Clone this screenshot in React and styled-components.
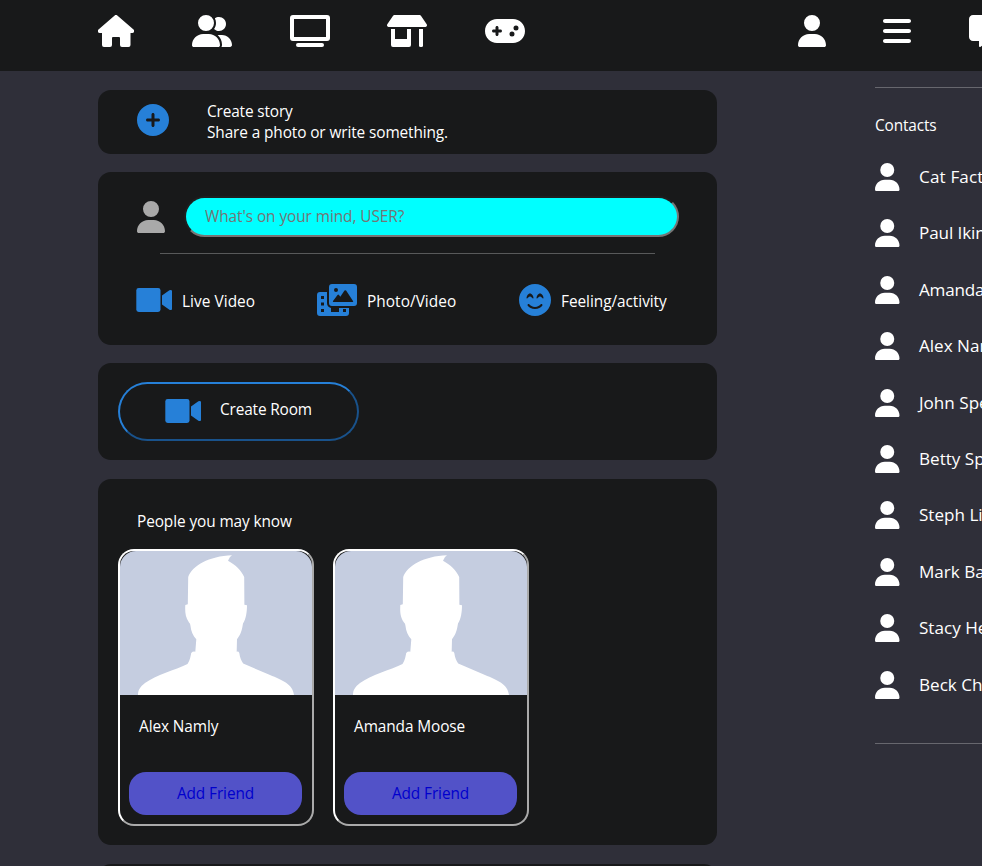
import React from "react";
import styled, { createGlobalStyle } from "styled-components";
import {
  FaUserGroup, FaGamepad, FaUser, FaBars, FaMessage, FaCirclePlus, FaFaceSmileBeam,
} from "react-icons/fa6";

const GlobalStyle = createGlobalStyle`
  * { box-sizing: border-box; }
  html, body { margin: 0; height: 866px; overflow: hidden; background: #2f2f39; }
  body { font-family: "Open Sans", "Noto Sans", sans-serif; color: #fff; }
  svg { display: block; flex: none; }
`;

const Page = styled.div`
  width: 982px;
  height: 866px;
  overflow: hidden;
`;

const Header = styled.header`
  height: 71px;
  padding: 15px 0 0 98px;
  background: #18191a;
  display: flex;
  gap: 273px;
  overflow: hidden;
`;

const NavGroup = styled.nav`
  display: flex;
  flex: none;
  gap: ${(p) => p.$gap}px;
`;

const Icon = styled.span`
  display: block;
  flex: none;
  width: ${(p) => p.$width}px;
  height: ${(p) => p.$height || 32}px;
  color: ${(p) => p.$color || "#fff"};
  svg { width: 100%; height: 100%; }
`;

const Columns = styled.div`
  display: flex;
  gap: 158px;
  padding-left: 98px;
`;

const Feed = styled.main`
  width: 619px;
  flex: none;
  padding-top: 19px;
`;

const Card = styled.section`
  height: ${(p) => p.$height}px;
  margin-bottom: ${(p) => p.$gap || 18}px;
  background: #18191a;
  border-radius: 13px;
`;

const StoryCard = styled(Card)`
  display: flex;
  padding: 14px 39px;
  gap: 38px;
`;

const Label = styled.span`
  display: block;
  font-size: ${(p) => p.$size || 15.4}px;
  line-height: 21px;
  letter-spacing: ${(p) => p.$track || 0}px;
  white-space: nowrap;
`;

const StoryText = styled.div`
  margin-top: -3px;
`;

const Composer = styled.div`
  display: flex;
  padding: 24px 38px 0 39px;
  gap: 19px;
  ${Icon} { margin-top: 5px; }
`;

const StatusInput = styled.input`
  width: 495px;
  height: 41px;
  padding: 0 19px 1px;
  border: 2px solid;
  border-color: #1e1f20 #767676 #767676 #1e1f20;
  border-radius: 20.5px;
  background: #00ffff;
  font: 15.4px "Open Sans", "Noto Sans", sans-serif;
  letter-spacing: ${(p) => p.$track}px;
  outline: none;
  &::placeholder { color: #757575; opacity: 1; }
`;

const Divider = styled.div`
  height: 1px;
  width: 495px;
  margin: 16px 0 0 62px;
  background: #58595a;
`;

const Actions = styled.div`
  display: grid;
  grid-template-columns: 181px 202px auto;
  padding: 30px 0 0 38px;
`;

const Action = styled.div`
  display: flex;
  gap: 10px;
  ${Label} { margin-top: 7px; }
`;

const RoomCard = styled(Card)`
  padding: 19px 20px;
`;

const RoomButton = styled.button`
  display: flex;
  width: 241px;
  height: 59px;
  padding: 11px 0 0 44.5px;
  gap: 19.5px;
  border: 2px solid;
  border-color: #2680d8 #19528b #19528b #2680d8;
  border-radius: 30px;
  background: transparent;
  color: #fff;
  font-family: inherit;
  ${Label} { margin-top: 4px; }
`;

const PeopleCard = styled(Card)`
  padding: 32px 20px 0;
`;

const PeopleTitle = styled.h2`
  margin: 0 0 17px 19px;
  font-weight: 400;
`;

const People = styled.div`
  display: flex;
  gap: 19px;
`;

const Person = styled.article`
  width: 196px;
  height: 277px;
  border: 2px solid;
  border-color: #fff #aaa #aaa #fff;
  border-radius: 16px;
  > svg { border-radius: 16px 16px 0 0; }
  > ${Label} { margin: 20.5px 0 0 19px; }
`;

const AddButton = styled.button`
  display: flex;
  justify-content: center;
  align-items: center;
  width: 173px;
  height: 43px;
  margin: 35.5px 0 0 9px;
  padding: 0;
  border: 0;
  border-radius: 17px;
  background: #5252c8;
  color: #0000cd;
  font-family: inherit;
`;

const Sidebar = styled.aside`
  width: 240px;
  flex: none;
  padding-top: 16px;
`;

const SideRule = styled.div`
  height: 1px;
  background: #67676e;
`;

const ContactsTitle = styled.div`
  margin: 27px 0;
`;

const ContactList = styled.div`
  display: grid;
  grid-template-rows: repeat(10, 56.4px);
  height: 580px;
`;

const Contact = styled.div`
  display: flex;
  gap: 19.5px;
  ${Label} { margin-top: 3px; }
`;

const HouseIcon = () => (
  <svg viewBox="0 0 36 32" fill="currentColor">
    <path d="M16.7.4a2 2 0 0 1 2.6 0L35.5 14.6a1.9 1.9 0 0 1-1.2 3.4H32.5V30a2 2 0 0 1-2 2H24a2 2 0 0 1-2-2V23a1 1 0 0 0-1-1H15a1 1 0 0 0-1 1V30a2 2 0 0 1-2 2H6a2 2 0 0 1-2-2V18H1.7A1.9 1.9 0 0 1 .5 14.6Z" />
  </svg>
);

const TvIcon = () => (
  <svg viewBox="0 0 40 32" fill="currentColor">
    <path fillRule="evenodd" d="M3 0H37a3 3 0 0 1 3 3V23a3 3 0 0 1-3 3H3a3 3 0 0 1-3-3V3a3 3 0 0 1 3-3ZM4 4V22H36V4Z" />
    <rect x="6" y="28" width="28" height="4" rx="2" />
  </svg>
);

const ShopIcon = () => (
  <svg viewBox="0 0 40 32" fill="currentColor">
    <path d="M7.6 0H32.4a2 2 0 0 1 1.7.9L39.7 9.3A1.75 1.75 0 0 1 38.3 12H1.7A1.75 1.75 0 0 1 .3 9.3L5.9.9A2 2 0 0 1 7.6 0Z" />
    <path d="M4 14H8V24H20V14H24V30a2 2 0 0 1-2 2H6a2 2 0 0 1-2-2Z" />
    <path d="M32 14h4v16.5a1.5 1.5 0 0 1-1.5 1.5h-1a1.5 1.5 0 0 1-1.5-1.5z" />
  </svg>
);

const VideoIcon = () => (
  <svg viewBox="0 0 36 32" fill="currentColor">
    <rect x="0.3" y="4" width="24.2" height="24" rx="2.4" />
    <path d="M26 11.4L33.4 6.3A2 2 0 0 1 36.5 7.9V24.1A2 2 0 0 1 33.4 25.7L26 20.6Z" />
  </svg>
);

const PhotoFilmIcon = () => (
  <svg viewBox="0 0 40 32" fill="currentColor">
    <path fillRule="evenodd" d="M15 0H37a3 3 0 0 1 3 3V19a3 3 0 0 1-3 3H15a3 3 0 0 1-3-3V3a3 3 0 0 1 3-3ZM19 4a2 2 0 1 0 0 4a2 2 0 1 0 0-4ZM16 17Q15.500 18 16.500 18H35.500Q36.700 18 36 17L29.100 6.600Q28.300 5.700 27.500 6.600L23.300 12.800L22 11Q21.200 10.200 20.500 11Z" />
    <path fillRule="evenodd" d="M3 8H10V19Q10 23 14 24V28H22V24H32V29a3 3 0 0 1-3 3H3a3 3 0 0 1-3-3V11a3 3 0 0 1 3-3ZM4 12V15H7V12ZM4 18.500V21.500H7V18.500ZM4 25V28H7V25ZM26 25V28H29V25Z" />
  </svg>
);

function Silhouette() {
  return (
    <svg width="192" height="144" viewBox="0 0 192 144" role="img" aria-label="Profile">
      <rect width="192" height="144" fill="#c5cde0" />
      <path
        fill="#fff"
        d="M18 144C18 139 20 136 25 132C36 124 55 119 67.5 113C70 109 70.5 106 71.2 102Q73 100 75.3 100.7L76.3 88.3C73 85 71 80 70.5 75Q70.3 72 69 71.5C65 66 65 60 65.3 54L67.8 53.3L68.2 26C72 15 89 5 112 4.3Q109 6 108 9.7C116 14 121 19 124.2 26L124.4 53.7L127 54.3C127 61 126 68 123 72.5C122 79 121 83 117 88.3L116.7 100.7Q118.5 100 119.3 102C120 107 121.5 110 123.2 112.5L150 124C162 129 173 133 174 144Z"
      />
    </svg>
  );
}

const BLUE = "#2680d8";

const people = [
  { name: "Alex Namly", track: -0.1 },
  { name: "Amanda Moose", track: -0.1 },
];

const contacts = [
  { name: "Cat Facts", track: 0.15 },
  { name: "Paul Ikin", track: -0.1 },
  { name: "Amanda Moose", track: -0.2 },
  { name: "Alex Namly", track: 0 },
  { name: "John Spencer", track: 0 },
  { name: "Betty Spaghetti", track: 0 },
  { name: "Steph Lincoln", track: 0 },
  { name: "Mark Baker", track: 0 },
  { name: "Stacy Henson", track: 0 },
  { name: "Beck Chambers", track: 0 },
];

export default function App() {
  return (
    <Page>
      <GlobalStyle />
      <Header>
        <NavGroup $gap={57.75}>
          <Icon $width={36}><HouseIcon /></Icon>
          <Icon $width={40}><FaUserGroup /></Icon>
          <Icon $width={40}><TvIcon /></Icon>
          <Icon $width={40}><ShopIcon /></Icon>
          <Icon $width={40}><FaGamepad /></Icon>
        </NavGroup>
        <NavGroup $gap={57.4}>
          <Icon $width={28}><FaUser /></Icon>
          <Icon $width={28}><FaBars /></Icon>
          <Icon $width={32}><FaMessage /></Icon>
        </NavGroup>
      </Header>
      <Columns>
        <Feed>
          <StoryCard $height={64}>
            <Icon $width={32} $color={BLUE}><FaCirclePlus /></Icon>
            <StoryText>
              <Label $track={-0.15}>Create story</Label>
              <Label $track={-0.11}>Share a photo or write something.</Label>
            </StoryText>
          </StoryCard>
          <Card $height={173}>
            <Composer>
              <Icon $width={28} $color="#a9a9a9"><FaUser /></Icon>
              <StatusInput $track={-0.07} placeholder="What's on your mind, USER?" />
            </Composer>
            <Divider />
            <Actions>
              <Action>
                <Icon $width={36} $color={BLUE}><VideoIcon /></Icon>
                <Label $track={0.05}>Live Video</Label>
              </Action>
              <Action>
                <Icon $width={40} $color={BLUE}><PhotoFilmIcon /></Icon>
                <Label $track={0.05}>Photo/Video</Label>
              </Action>
              <Action>
                <Icon $width={32} $color={BLUE}><FaFaceSmileBeam /></Icon>
                <Label $track={-0.05}>Feeling/activity</Label>
              </Action>
            </Actions>
          </Card>
          <RoomCard $height={97} $gap={19}>
            <RoomButton>
              <Icon $width={36} $color={BLUE}><VideoIcon /></Icon>
              <Label $track={-0.15}>Create Room</Label>
            </RoomButton>
          </RoomCard>
          <PeopleCard $height={366} $gap={19}>
            <PeopleTitle><Label $track={-0.1}>People you may know</Label></PeopleTitle>
            <People>
              {people.map((p) => (
                <Person key={p.name}>
                  <Silhouette />
                  <Label $track={p.track}>{p.name}</Label>
                  <AddButton><Label $track={-0.1}>Add Friend</Label></AddButton>
                </Person>
              ))}
            </People>
          </PeopleCard>
          <Card $height={60} />
        </Feed>
        <Sidebar>
          <SideRule />
          <ContactsTitle><Label $track={-0.15}>Contacts</Label></ContactsTitle>
          <ContactList>
            {contacts.map((c) => (
              <Contact key={c.name}>
                <Icon $width={24.5} $height={28}><FaUser /></Icon>
                <Label $size={17.1} $track={c.track}>{c.name}</Label>
              </Contact>
            ))}
          </ContactList>
          <SideRule />
        </Sidebar>
      </Columns>
    </Page>
  );
}
